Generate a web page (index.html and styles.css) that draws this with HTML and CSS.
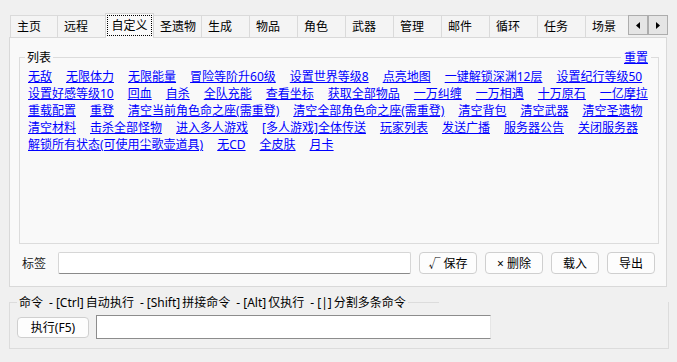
FILE: index.html
```html
<!DOCTYPE html>
<html lang="zh-CN">
<head>
<meta charset="utf-8">
<title>自定义</title>
<link rel="stylesheet" href="styles.css">
</head>
<body>
<div class="window">
  <div class="tabbar">
    <div class="tabs">
      <div class="tab first">主页</div>
      <div class="tab">远程</div>
      <div class="tab active"><span class="focus">自定义</span></div>
      <div class="tab">圣遗物</div>
      <div class="tab">生成</div>
      <div class="tab">物品</div>
      <div class="tab">角色</div>
      <div class="tab">武器</div>
      <div class="tab">管理</div>
      <div class="tab">邮件</div>
      <div class="tab">循环</div>
      <div class="tab">任务</div>
      <div class="tab last">场景</div>
    </div>
    <div class="scroll">
      <button class="arrow" type="button"><svg width="4" height="7" viewBox="0 0 4 7"><polygon points="4,0 0,3.5 4,7" fill="#000"/></svg></button>
      <button class="arrow" type="button"><svg width="4" height="7" viewBox="0 0 4 7"><polygon points="0,0 4,3.5 0,7" fill="#000"/></svg></button>
    </div>
  </div>

  <div class="panel">
    <div class="group">
      <span class="group-title">列表</span>
      <a class="group-action" href="#">重置</a>
      <div class="links">
        <a href="#">无敌</a>
        <a href="#">无限体力</a>
        <a href="#">无限能量</a>
        <a href="#">冒险等阶升60级</a>
        <a href="#">设置世界等级8</a>
        <a href="#">点亮地图</a>
        <a href="#">一键解锁深渊12层</a>
        <a href="#">设置纪行等级50</a>
        <a href="#">设置好感等级10</a>
        <a href="#">回血</a>
        <a href="#">自杀</a>
        <a href="#">全队充能</a>
        <a href="#">查看坐标</a>
        <a href="#">获取全部物品</a>
        <a href="#">一万纠缠</a>
        <a href="#">一万相遇</a>
        <a href="#">十万原石</a>
        <a href="#">一亿摩拉</a>
        <a href="#">重载配置</a>
        <a href="#">重登</a>
        <a href="#">清空当前角色命之座(需重登)</a>
        <a href="#">清空全部角色命之座(需重登)</a>
        <a href="#">清空背包</a>
        <a href="#">清空武器</a>
        <a href="#">清空圣遗物</a>
        <a href="#">清空材料</a>
        <a href="#">击杀全部怪物</a>
        <a href="#">进入多人游戏</a>
        <a href="#">[多人游戏]全体传送</a>
        <a href="#">玩家列表</a>
        <a href="#">发送广播</a>
        <a href="#">服务器公告</a>
        <a href="#">关闭服务器</a>
        <a href="#">解锁所有状态(可使用尘歌壶道具)</a>
        <a href="#">无CD</a>
        <a href="#">全皮肤</a>
        <a href="#">月卡</a>
      </div>
    </div>
    <div class="tag-row">
      <label class="tag-label">标签</label>
      <input class="tag-input" type="text">
      <button class="btn btn-wide" type="button">√ 保存</button>
      <button class="btn btn-wide" type="button">× 删除</button>
      <button class="btn btn-narrow" type="button">载入</button>
      <button class="btn btn-narrow" type="button">导出</button>
    </div>
  </div>

  <div class="cmd">
    <div class="cmd-head">
      <span class="line line-start"></span>
      <span class="cmd-title">命令<span class="sep">-</span>[Ctrl] 自动执行<span class="sep">-</span>[Shift] 拼接命令<span class="sep">-</span>[Alt] 仅执行<span class="sep">-</span>[|] 分割多条命令</span>
      <span class="line line-end"></span>
    </div>
    <div class="cmd-row">
      <button class="btn btn-exec" type="button">执行(F5)</button>
      <input class="cmd-input" type="text">
    </div>
  </div>
</div>
</body>
</html>
```

FILE: styles.css
```css
* {
  box-sizing: border-box;
}

html,
body {
  margin: 0;
  background: #f0f0f0;
}

body {
  width: 677px;
  height: 362px;
  overflow: hidden;
  font-family: "Noto Sans", "Noto Sans CJK SC", sans-serif;
  font-size: 12px;
  color: #000;
}

.window {
  padding-top: 13px;
}

/* tabs */
.tabbar {
  display: flex;
  align-items: flex-start;
  margin-left: 10px;
  height: 24px;
  position: relative;
  z-index: 1;
}

.tabs {
  display: flex;
  align-items: flex-end;
  width: 618px;
  height: 25px;
  overflow: hidden;
}

.tab {
  flex: none;
  width: 48px;
  height: 22px;
  margin-bottom: 1px;
  padding-left: 6px;
  line-height: 21px;
  white-space: nowrap;
  background: #f4f4f4;
  border-top: 1px solid #dadada;
  border-right: 1px solid #dadada;
}

.tab.first {
  border-left: 1px solid #dadada;
}

.tab.last {
  width: 42px;
  border-right: none;
}

.tab.active {
  width: 49px;
  height: 25px;
  margin: 0 0 0 -1px;
  padding: 0 1px;
  background: #f9f9f9;
  border: 1px solid #d6d6d6;
  border-bottom: none;
}

.focus {
  display: block;
  height: 21px;
  margin-top: 1px;
  border: 1px dotted #000;
  line-height: 19px;
  text-align: center;
}

.scroll {
  display: flex;
  flex: none;
  margin-top: 2px;
}

.arrow {
  width: 20px;
  height: 20px;
  padding: 0;
  display: flex;
  align-items: center;
  justify-content: center;
  background: #e5e5e5;
  border: 1px solid #adadad;
  border-radius: 0;
}

/* main panel */
.panel {
  width: 658px;
  margin-left: 9px;
  padding: 19px 7px 12px 9px;
  background: #f9f9f9;
  border: 1px solid #d9d9d9;
}

.group {
  position: relative;
  height: 187px;
  padding: 10px 0 0 8px;
  border: 1px solid #dcdcdc;
}

.group-title,
.group-action {
  position: absolute;
  top: -9px;
  line-height: 17px;
  background: #f9f9f9;
}

.group-title {
  left: 5px;
  padding: 0 2px;
}

.group-action {
  right: 7px;
  padding: 0 3px;
  color: #0000ff;
}

.links {
  display: flex;
  flex-wrap: wrap;
  column-gap: 14px;
  width: 630px;
  line-height: 17px;
}

.links a {
  color: #0000ff;
  white-space: nowrap;
}

.tag-row {
  display: flex;
  align-items: center;
  height: 22px;
  margin-top: 8px;
}

.tag-row > * {
  flex: none;
}

.tag-label {
  width: 26px;
  margin-left: 3px;
  white-space: nowrap;
  color: #1a1a1a;
}

.tag-input {
  width: 353px;
  height: 22px;
  margin: 0 8px 0 10px;
  background: #fff;
  border: 1px solid #d6d6d6;
  border-bottom-color: #8a8a8a;
  border-radius: 2px;
  outline: none;
}

.btn {
  height: 22px;
  padding: 0;
  font-family: inherit;
  font-size: 12px;
  color: #000;
  background: #fdfdfd;
  border: 1px solid #cfcfcf;
  border-radius: 4px;
  white-space: nowrap;
}

.btn-wide {
  width: 58px;
  margin-right: 8px;
}

.btn-narrow {
  width: 48px;
  margin-right: 8px;
}

/* command group */
.cmd {
  position: relative;
  width: 660px;
  margin: 15px 0 0 9px;
  padding: 13px 0 9px 7px;
  border: 1px solid #dcdcdc;
  border-top: none;
}

.cmd-head {
  position: absolute;
  top: -7px;
  left: -1px;
  height: 15px;
  display: flex;
  align-items: center;
}

.line {
  height: 1px;
  background: #dcdcdc;
}

.line-start {
  width: 8px;
}

.line-end {
  width: 31px;
}

.cmd-title {
  padding: 0 2px;
  line-height: 15px;
  white-space: nowrap;
  word-spacing: -1px;
}

.sep {
  margin: 0 3px 0 6px;
}

.cmd-row {
  display: flex;
  align-items: center;
  height: 24px;
}

.cmd-row > * {
  flex: none;
}

.btn-exec {
  width: 72px;
  height: 21px;
  margin-right: 7px;
}

.cmd-input {
  width: 395px;
  height: 24px;
  background: #fff;
  border: 1px solid #8c8c8c;
  border-right-color: #e6e6e6;
  outline: none;
}
```
